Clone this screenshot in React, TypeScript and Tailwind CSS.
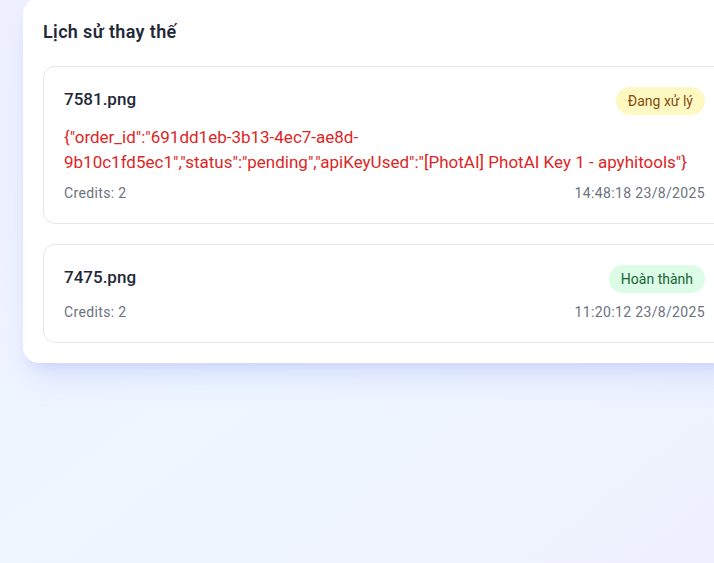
import React from "react";

type Item = {
  name: string;
  status: "pending" | "done";
  error?: string;
  credits: number;
  time: string;
};

const items: Item[] = [
  {
    name: "7581.png",
    status: "pending",
    error:
      '{"order_id":"691dd1eb-3b13-4ec7-ae8d-9b10c1fd5ec1","status":"pending","apiKeyUsed":"[PhotAI] PhotAI Key 1 - apyhitools"}',
    credits: 2,
    time: "14:48:18 23/8/2025",
  },
  {
    name: "7475.png",
    status: "done",
    credits: 2,
    time: "11:20:12 23/8/2025",
  },
];

function Badge({ status }: { status: Item["status"] }) {
  if (status === "pending") {
    return (
      <span className="shrink-0 rounded-full bg-[#fef9c3] px-3 py-1 text-sm leading-5 text-[#854d0e]">
        Đang xử lý
      </span>
    );
  }
  return (
    <span className="shrink-0 rounded-full bg-[#dcfce7] px-3 py-1 text-sm leading-5 text-[#166534]">
      Hoàn thành
    </span>
  );
}

export default function App() {
  return (
    <div
      className="h-[563px] w-[714px] overflow-hidden bg-gradient-to-br from-[#eef0fe] via-[#eff6ff] to-[#eef1fd]"
      style={{ fontFamily: "Roboto, 'Noto Sans', sans-serif" }}
    >
      <div className="-mt-[2px] ml-[23px] w-[723px] rounded-2xl bg-white p-5 shadow-[0_20px_30px_-8px_rgba(165,180,252,0.35),0_8px_12px_-6px_rgba(165,180,252,0.3)]">
        <h2 className="mb-5 text-lg font-semibold leading-7 tracking-[0.02em] text-[#1f2937]">
          Lịch sử thay thế
        </h2>
        <div className="flex flex-col gap-5">
          {items.map((it) => (
            <div key={it.name} className="rounded-xl border border-[#e5e7eb] bg-white p-5">
              <div className="flex items-start justify-between">
                <span className="text-[17px] font-medium leading-6 text-[#1f2937]">{it.name}</span>
                <Badge status={it.status} />
              </div>
              {it.error && (
                <p className="mt-[10px] break-words text-[17px] leading-[25px] text-[#dc2626]">{it.error}</p>
              )}
              <div
                className={`${it.error ? "mt-2" : "mt-[9px]"} flex items-center justify-between text-sm leading-5 tracking-[0.025em] text-[#6b7280]`}
              >
                <span>Credits: {it.credits}</span>
                <span>{it.time}</span>
              </div>
            </div>
          ))}
        </div>
      </div>
    </div>
  );
}
